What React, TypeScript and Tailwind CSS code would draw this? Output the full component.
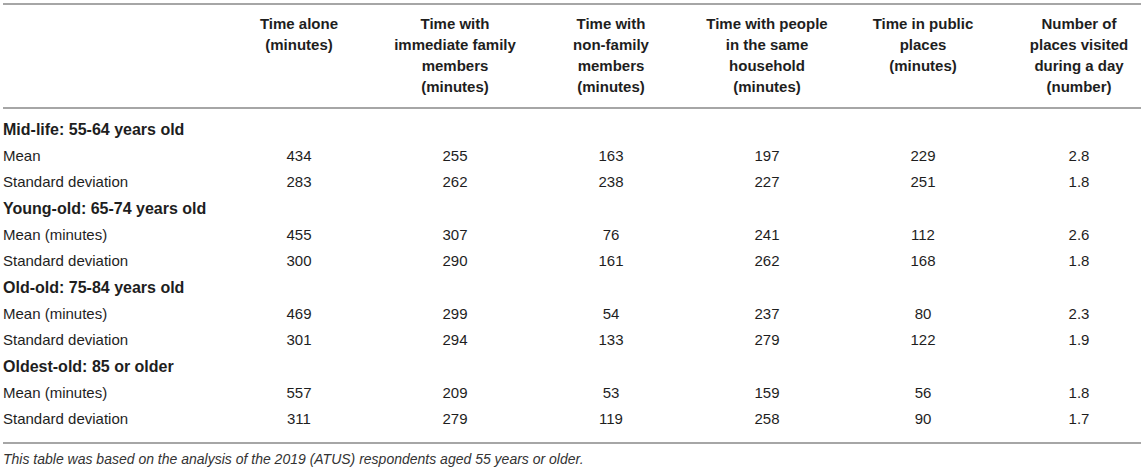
import React from 'react'

const headers = [
  ['Time alone', '(minutes)'],
  ['Time with', 'immediate family', 'members', '(minutes)'],
  ['Time with', 'non-family', 'members', '(minutes)'],
  ['Time with people', 'in the same', 'household', '(minutes)'],
  ['Time in public', 'places', '(minutes)'],
  ['Number of', 'places visited', 'during a day', '(number)'],
]

const groups = [
  {
    title: 'Mid-life: 55-64 years old',
    rows: [
      ['Mean', '434', '255', '163', '197', '229', '2.8'],
      ['Standard deviation', '283', '262', '238', '227', '251', '1.8'],
    ],
  },
  {
    title: 'Young-old: 65-74 years old',
    rows: [
      ['Mean (minutes)', '455', '307', '76', '241', '112', '2.6'],
      ['Standard deviation', '300', '290', '161', '262', '168', '1.8'],
    ],
  },
  {
    title: 'Old-old: 75-84 years old',
    rows: [
      ['Mean (minutes)', '469', '299', '54', '237', '80', '2.3'],
      ['Standard deviation', '301', '294', '133', '279', '122', '1.9'],
    ],
  },
  {
    title: 'Oldest-old: 85 or older',
    rows: [
      ['Mean (minutes)', '557', '209', '53', '159', '56', '1.8'],
      ['Standard deviation', '311', '279', '119', '258', '90', '1.7'],
    ],
  },
]

const grid = 'grid grid-cols-[218px_156px_156px_156px_156px_156px_156px]'

export default function App() {
  return (
    <div className="bg-white w-[1145px] h-[471px] overflow-hidden pt-[3px] pl-[3px] text-[#1e1e1e] font-['Liberation_Sans',Arial,sans-serif]">
      <div className="w-[1138px] border-t-2 border-b-2 border-[#a6a6a6]">
        {/* header */}
        <div className={`${grid} border-b-2 border-[#a6a6a6] pt-[8px] h-[104px] text-[15px] leading-[21px] font-bold`}>
          <div />
          {headers.map((h) => (
            <div key={h.join()} className="text-center whitespace-nowrap">
              {h.map((line) => (
                <div key={line}>{line}</div>
              ))}
            </div>
          ))}
        </div>

        {/* body */}
        <div className="pt-[8px] pb-[9px]">
          {groups.map((g) => (
            <div key={g.title}>
              <div className="h-[26.3px] flex items-center text-[16px] font-bold">{g.title}</div>
              {g.rows.map((r) => (
                <div key={r[0]} className={`${grid} h-[26.3px] items-center text-[15px]`}>
                  {r.map((c, i) => (
                    <div key={i} className={i === 0 ? 'text-left' : 'text-center'}>
                      {c}
                    </div>
                  ))}
                </div>
              ))}
            </div>
          ))}
        </div>
      </div>
      <p className="mt-[5px] text-[14px] italic text-[#333]">
        This table was based on the analysis of the 2019 (ATUS) respondents aged 55 years or older.
      </p>
    </div>
  )
}
